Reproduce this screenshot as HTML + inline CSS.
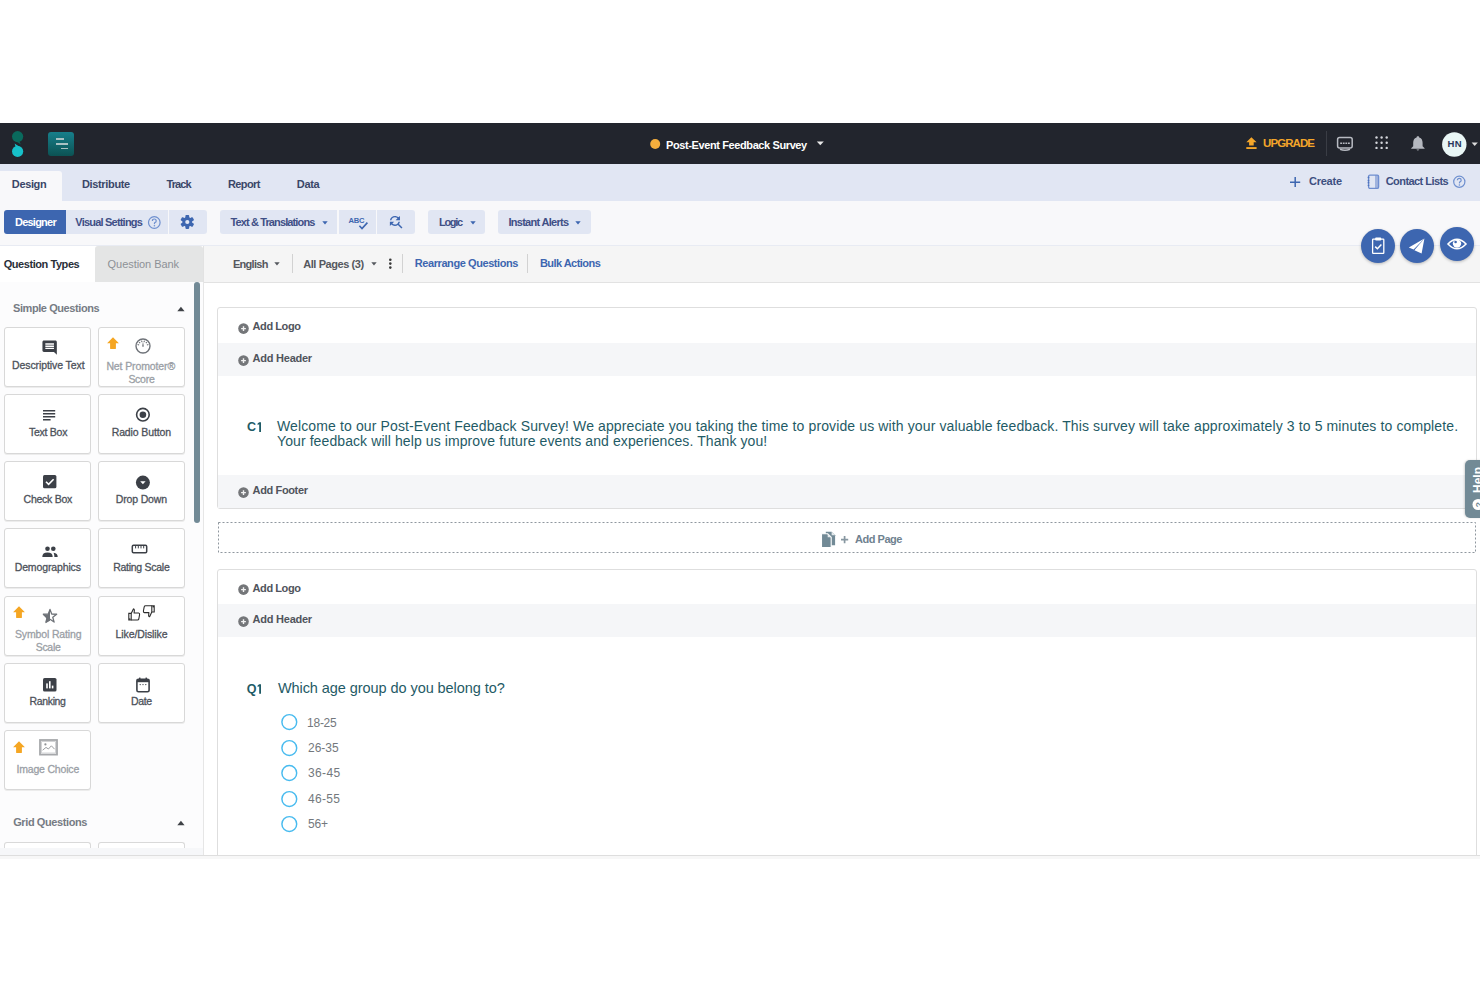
<!DOCTYPE html>
<html><head><meta charset="utf-8"><style>
html,body{margin:0;padding:0;}
body{width:1480px;height:987px;position:relative;overflow:hidden;background:#fff;font-family:"Liberation Sans",sans-serif;}
.t{position:absolute;white-space:nowrap;}
svg{display:block;}
</style></head><body>
<div style="position:absolute;left:0px;top:123px;width:1480px;height:41px;background:#22252d;"></div>
<div style="position:absolute;left:0px;top:164px;width:1480px;height:37px;background:#e1e6f3;"></div>
<div style="position:absolute;left:0px;top:171px;width:62px;height:30px;background:#f8f8fa;border-radius:0 3px 0 0;"></div>
<div style="position:absolute;left:0px;top:201px;width:1480px;height:45px;background:#f8f8fa;border-bottom:1px solid #e8ebf3;box-sizing:border-box;"></div>
<div style="position:absolute;left:0px;top:246px;width:95px;height:36px;background:#ffffff;"></div>
<div style="position:absolute;left:95px;top:246px;width:108px;height:36px;background:#e4e5e5;border-radius:3px 3px 0 0;"></div>
<div style="position:absolute;left:203px;top:246px;width:1277px;height:37px;background:#f5f5f5;border-bottom:1px solid #e2e2e2;border-left:1px solid #e2e2e2;box-sizing:border-box;"></div>
<div style="position:absolute;left:0px;top:282px;width:204px;height:573px;background:#fcfcfd;border-right:1px solid #e6e6e6;box-sizing:border-box;"></div>
<div style="position:absolute;left:204px;top:283px;width:1276px;height:572px;background:#ffffff;"></div>
<div style="position:absolute;left:0px;top:855px;width:1480px;height:1px;background:#dedede;"></div>
<div style="position:absolute;left:0px;top:856px;width:1480px;height:3px;background:#f7f7f7;"></div>
<svg style="position:absolute;left:8px;top:129px;overflow:visible;" width="20" height="30" viewBox="0 0 20 30">
<circle cx="9.6" cy="7.6" r="5.6" fill="#0a6a5d"/>
<path d="M11.5 12.5 L12.8 15.5 L9.0 12.8 Z" fill="#0a6a5d"/>
<circle cx="9.6" cy="22.4" r="5.6" fill="#17c0c9"/>
<path d="M7.5 17.6 L6.6 14.4 L10.2 16.9 Z" fill="#17c0c9"/>
</svg>
<div style="position:absolute;left:48px;top:132px;width:26px;height:24px;background:linear-gradient(#177f8b,#0c5253);border-radius:3px;"></div>
<div style="position:absolute;left:56px;top:138.1px;width:8px;height:1.7px;background:#a9c1c3;"></div>
<div style="position:absolute;left:56px;top:142.9px;width:12px;height:1.7px;background:#a9c1c3;"></div>
<div style="position:absolute;left:61px;top:147.5px;width:7px;height:1.7px;background:#a9c1c3;"></div>
<svg style="position:absolute;left:650px;top:139px;overflow:visible;" width="11" height="11" viewBox="0 0 11 11"><circle cx="5.2" cy="5" r="5" fill="#f5ae3d"/></svg>
<svg style="position:absolute;left:816px;top:141px;overflow:visible;" width="9" height="5" viewBox="0 0 9 5"><path d="M0.8 0.5 L7.8 0.5 L4.3 4.3 Z" fill="#e8e8e8"/></svg>
<svg style="position:absolute;left:1246px;top:137px;overflow:visible;" width="12" height="13" viewBox="0 0 12 13"><path d="M5.4 0.3 L10.6 5.3 L7.7 5.3 L7.7 8.6 L3.1 8.6 L3.1 5.3 L0.3 5.3 Z" fill="#f4a62a"/><rect x="0.3" y="10.1" width="10.3" height="1.9" fill="#f4a62a"/></svg>
<div style="position:absolute;left:1326px;top:131px;width:1px;height:25px;background:#3a3d45;"></div>
<svg style="position:absolute;left:1336px;top:136px;overflow:visible;" width="18" height="16" viewBox="0 0 18 16"><rect x="1.6" y="1.6" width="14.6" height="10.4" rx="2" fill="none" stroke="#b8bbc2" stroke-width="1.5"/><path d="M4.2 7.2 H13.8" stroke="#b8bbc2" stroke-width="1.5" stroke-dasharray="1.8 0.8"/><path d="M4 13.2 Q9 15.2 14 13.2" stroke="#b8bbc2" stroke-width="1.6" fill="none"/></svg>
<svg style="position:absolute;left:1375px;top:135.8px;overflow:visible;" width="14" height="14" viewBox="0 0 14 14"><circle cx="1.5" cy="1.5" r="1.2" fill="#d4d6db"/><circle cx="1.5" cy="6.7" r="1.2" fill="#d4d6db"/><circle cx="1.5" cy="11.9" r="1.2" fill="#d4d6db"/><circle cx="6.6" cy="1.5" r="1.2" fill="#d4d6db"/><circle cx="6.6" cy="6.7" r="1.2" fill="#d4d6db"/><circle cx="6.6" cy="11.9" r="1.2" fill="#d4d6db"/><circle cx="11.7" cy="1.5" r="1.2" fill="#d4d6db"/><circle cx="11.7" cy="6.7" r="1.2" fill="#d4d6db"/><circle cx="11.7" cy="11.9" r="1.2" fill="#d4d6db"/></svg>
<svg style="position:absolute;left:1410px;top:135px;overflow:visible;" width="16" height="17" viewBox="0 0 16 17"><path d="M7.9 1.2 C8.8 1.2 9.2 1.8 9.2 2.4 C11.8 3.1 12.6 5.4 12.6 7.8 L12.6 11.2 L14.6 13.2 L14.6 13.8 L1.2 13.8 L1.2 13.2 L3.2 11.2 L3.2 7.8 C3.2 5.4 4.0 3.1 6.6 2.4 C6.6 1.8 7.0 1.2 7.9 1.2 Z" fill="#b5b8bf"/><path d="M6.4 14.6 Q7.9 16.6 9.4 14.6 Z" fill="#b5b8bf"/></svg>
<svg style="position:absolute;left:1442px;top:132px;overflow:visible;" width="25" height="25" viewBox="0 0 25 25"><circle cx="12.3" cy="12.5" r="12.2" fill="#e9f6f5"/></svg>
<svg style="position:absolute;left:1471px;top:142px;overflow:visible;" width="8" height="5" viewBox="0 0 8 5"><path d="M0.6 0.6 L6.8 0.6 L3.7 4 Z" fill="#dcdcdc"/></svg>
<svg style="position:absolute;left:1289px;top:176px;overflow:visible;" width="12" height="12" viewBox="0 0 12 12"><path d="M6.2 1 V11 M1 6.2 H11.2" stroke="#3d66b0" stroke-width="1.5"/></svg>
<svg style="position:absolute;left:1366px;top:174px;overflow:visible;" width="14" height="16" viewBox="0 0 14 16"><rect x="9" y="1" width="3.6" height="13.6" fill="#a0b3dd"/><rect x="2.6" y="1.2" width="10" height="13.2" rx="1.3" fill="none" stroke="#6f8ed0" stroke-width="1.3"/><circle cx="2.5" cy="3.5" r="0.9" fill="#4e73bf"/><circle cx="2.5" cy="6.5" r="0.9" fill="#4e73bf"/><circle cx="2.5" cy="8.7" r="0.9" fill="#4e73bf"/><circle cx="2.5" cy="11.3" r="0.9" fill="#4e73bf"/></svg>
<svg style="position:absolute;left:1452px;top:175px;overflow:visible;" width="14" height="14" viewBox="0 0 14 14"><circle cx="7.3" cy="6.8" r="5.6" fill="none" stroke="#6f90cf" stroke-width="1.2"/><path d="M5.4 5.3 Q5.4 3.4 7.3 3.4 Q9.2 3.4 9.2 5.2 Q9.2 6.4 7.6 7.1 L7.4 8.4" fill="none" stroke="#6f90cf" stroke-width="1.2"/><circle cx="7.4" cy="10" r="0.8" fill="#6f90cf"/></svg>
<div style="position:absolute;left:4px;top:210px;width:62px;height:24px;background:#3d66b0;border-radius:3px 0 0 3px;"></div>
<div style="position:absolute;left:66px;top:210px;width:102px;height:24px;background:#e1e6f3;"></div>
<div style="position:absolute;left:169px;top:210px;width:38px;height:24px;background:#e1e6f3;border-radius:0 3px 3px 0;"></div>
<div style="position:absolute;left:220px;top:210px;width:117px;height:24px;background:#e1e6f3;border-radius:3px 0 0 3px;"></div>
<div style="position:absolute;left:339px;top:210px;width:37px;height:24px;background:#e1e6f3;"></div>
<div style="position:absolute;left:377px;top:210px;width:38px;height:24px;background:#e1e6f3;border-radius:0 3px 3px 0;"></div>
<div style="position:absolute;left:428px;top:210px;width:57px;height:24px;background:#e1e6f3;border-radius:3px;"></div>
<div style="position:absolute;left:498px;top:210px;width:93px;height:24px;background:#e1e6f3;border-radius:3px;"></div>
<svg style="position:absolute;left:147px;top:215px;overflow:visible;" width="15" height="15" viewBox="0 0 15 15"><circle cx="7.3" cy="7.5" r="5.8" fill="none" stroke="#6f90cf" stroke-width="1.2"/><path d="M5.4 6 Q5.4 4 7.3 4 Q9.2 4 9.2 5.9 Q9.2 7.1 7.6 7.8 L7.4 9.2" fill="none" stroke="#6f90cf" stroke-width="1.2"/><circle cx="7.4" cy="10.8" r="0.8" fill="#6f90cf"/></svg>
<svg style="position:absolute;left:180px;top:215px;overflow:visible;" width="15" height="15" viewBox="0 0 15 15"><g transform="translate(7.3 7)"><rect x="-1.9" y="-6.9" width="3.8" height="4" rx="0.8" fill="#3d66b0" transform="rotate(0)"/><rect x="-1.9" y="-6.9" width="3.8" height="4" rx="0.8" fill="#3d66b0" transform="rotate(60)"/><rect x="-1.9" y="-6.9" width="3.8" height="4" rx="0.8" fill="#3d66b0" transform="rotate(120)"/><rect x="-1.9" y="-6.9" width="3.8" height="4" rx="0.8" fill="#3d66b0" transform="rotate(180)"/><rect x="-1.9" y="-6.9" width="3.8" height="4" rx="0.8" fill="#3d66b0" transform="rotate(240)"/><rect x="-1.9" y="-6.9" width="3.8" height="4" rx="0.8" fill="#3d66b0" transform="rotate(300)"/><circle r="4.9" fill="#3d66b0"/><circle r="2.1" fill="#e1e6f3"/></g></svg>
<svg style="position:absolute;left:322px;top:221px;overflow:visible;" width="7" height="4.6" viewBox="0 0 7 4.6"><path d="M0.3 0.3 L5.7 0.3 L3.0 3.6 Z" fill="#3d66b0"/></svg>
<svg style="position:absolute;left:470px;top:221px;overflow:visible;" width="7" height="4.6" viewBox="0 0 7 4.6"><path d="M0.3 0.3 L5.7 0.3 L3.0 3.6 Z" fill="#3d66b0"/></svg>
<svg style="position:absolute;left:575px;top:221px;overflow:visible;" width="7" height="4.6" viewBox="0 0 7 4.6"><path d="M0.3 0.3 L5.7 0.3 L3.0 3.6 Z" fill="#3d66b0"/></svg>
<svg style="position:absolute;left:346px;top:214px;overflow:visible;" width="24" height="17" viewBox="0 0 24 17"><text x="2.4" y="8.8" font-family="Liberation Sans" font-weight="700" font-size="7.6" fill="#3d66b0" letter-spacing="-0.2">ABC</text><path d="M13.4 11.8 L16 14.6 L21.4 8.6" fill="none" stroke="#3d66b0" stroke-width="1.6"/></svg>
<svg style="position:absolute;left:386.5px;top:212.5px;overflow:visible;" width="17.3" height="17.3" viewBox="0 0 17.3 17.3"><path transform="scale(0.72)" fill="#3d66b0" d="M11 6c1.38 0 2.63.56 3.54 1.46L12 10h6V4l-2.05 2.05C14.68 4.78 12.93 4 11 4c-3.53 0-6.43 2.61-6.92 6H6.1c.46-2.28 2.48-4 4.9-4zm5.64 9.140c.66-.9 1.12-1.97 1.28-3.14H15.9c-.46 2.28-2.48 4-4.9 4-1.38 0-2.630-.56-3.54-1.46L10 12H4v6l2.05-2.05C7.32 17.22 9.07 18 11 18c1.55 0 2.98-.51 4.14-1.36L20 21.49 21.49 20l-4.85-4.86z"/></svg>
<svg style="position:absolute;left:274px;top:262px;overflow:visible;" width="7" height="4.4" viewBox="0 0 7 4.4"><path d="M0.3 0.3 L5.7 0.3 L3.0 3.4 Z" fill="#55585e"/></svg>
<div style="position:absolute;left:292px;top:254px;width:1px;height:19px;background:#d2d2d2;"></div>
<svg style="position:absolute;left:370.5px;top:262px;overflow:visible;" width="7" height="4.4" viewBox="0 0 7 4.4"><path d="M0.3 0.3 L5.7 0.3 L3.0 3.4 Z" fill="#55585e"/></svg>
<svg style="position:absolute;left:388px;top:258px;overflow:visible;" width="5" height="12" viewBox="0 0 5 12"><circle cx="2.3" cy="1.8" r="1.3" fill="#3a3a3a"/><circle cx="2.3" cy="5.6" r="1.3" fill="#3a3a3a"/><circle cx="2.3" cy="9.6" r="1.3" fill="#3a3a3a"/></svg>
<div style="position:absolute;left:402px;top:254px;width:1px;height:19px;background:#d2d2d2;"></div>
<div style="position:absolute;left:527px;top:254px;width:1px;height:19px;background:#d2d2d2;"></div>
<div style="position:absolute;left:1360.5px;top:228.5px;width:34px;height:34px;border-radius:50%;background:#3d66b0;box-shadow:0 1px 3px rgba(0,0,0,0.25);"></div>
<svg style="position:absolute;left:1360.5px;top:228.5px;overflow:visible;" width="34" height="34" viewBox="0 0 34 34"><rect x="11.6" y="10.2" width="11.2" height="14.2" rx="0.6" fill="none" stroke="#fff" stroke-width="1.3"/><rect x="14.2" y="8.6" width="6" height="3" rx="0.8" fill="#fff"/><path d="M14.2 17.6 L16.4 19.8 L20.4 15.6" fill="none" stroke="#fff" stroke-width="1.5"/></svg>
<div style="position:absolute;left:1399.8px;top:228.5px;width:34px;height:34px;border-radius:50%;background:#3d66b0;box-shadow:0 1px 3px rgba(0,0,0,0.25);"></div>
<svg style="position:absolute;left:1399.8px;top:228.5px;overflow:visible;" width="34" height="34" viewBox="0 0 34 34"><path d="M24.4 9.6 L8.8 18.6 L13.6 20.4 Z" fill="#fff"/><path d="M24.4 9.6 L14.4 21.2 L21.6 24.6 Z" fill="#fff"/></svg>
<div style="position:absolute;left:1439.5px;top:227px;width:34px;height:34px;border-radius:50%;background:#3d66b0;box-shadow:0 1px 3px rgba(0,0,0,0.25);"></div>
<svg style="position:absolute;left:1439.5px;top:227px;overflow:visible;" width="34" height="34" viewBox="0 0 34 34"><path d="M8 17 Q17 7.5 26 17 Q17 26.5 8 17 Z" fill="none" stroke="#fff" stroke-width="1.6"/><circle cx="17" cy="16.6" r="4.2" fill="#fff"/><circle cx="15.6" cy="15" r="1.3" fill="#3d66b0"/></svg>
<div class="t" style="left:666.00px;top:139.89px;font-size:11px;line-height:11px;color:#ffffff;font-weight:700;letter-spacing:-0.392px;">Post-Event Feedback Survey</div>
<div class="t" style="left:1263.00px;top:137.66px;font-size:11.5px;line-height:11.5px;color:#f4a62a;font-weight:700;letter-spacing:-0.917px;">UPGRADE</div>
<div class="t" style="left:1447.60px;top:139.36px;font-size:9.5px;line-height:9.5px;color:#28365a;font-weight:700;letter-spacing:0.300px;">HN</div>
<div class="t" style="left:11.80px;top:179.49px;font-size:11px;line-height:11px;color:#3a4668;font-weight:700;letter-spacing:-0.360px;">Design</div>
<div class="t" style="left:81.90px;top:179.49px;font-size:11px;line-height:11px;color:#3a4668;font-weight:700;letter-spacing:-0.333px;">Distribute</div>
<div class="t" style="left:166.40px;top:179.49px;font-size:11px;line-height:11px;color:#3a4668;font-weight:700;letter-spacing:-0.850px;">Track</div>
<div class="t" style="left:228.00px;top:179.49px;font-size:11px;line-height:11px;color:#3a4668;font-weight:700;letter-spacing:-0.600px;">Report</div>
<div class="t" style="left:296.80px;top:179.49px;font-size:11px;line-height:11px;color:#3a4668;font-weight:700;letter-spacing:-0.333px;">Data</div>
<div class="t" style="left:1309.00px;top:176.19px;font-size:11px;line-height:11px;color:#3d4f80;font-weight:700;letter-spacing:-0.240px;">Create</div>
<div class="t" style="left:1385.70px;top:176.19px;font-size:11px;line-height:11px;color:#3d4f80;font-weight:700;letter-spacing:-0.558px;">Contact Lists</div>
<div class="t" style="left:15.00px;top:217.09px;font-size:11px;line-height:11px;color:#ffffff;font-weight:700;letter-spacing:-0.771px;">Designer</div>
<div class="t" style="left:75.30px;top:217.09px;font-size:11px;line-height:11px;color:#3f4f86;font-weight:700;letter-spacing:-0.793px;">Visual Settings</div>
<div class="t" style="left:230.50px;top:217.09px;font-size:11px;line-height:11px;color:#3f4f86;font-weight:700;letter-spacing:-0.878px;">Text &amp; Translations</div>
<div class="t" style="left:439.00px;top:217.09px;font-size:11px;line-height:11px;color:#3f4f86;font-weight:700;letter-spacing:-1.300px;">Logic</div>
<div class="t" style="left:508.40px;top:217.09px;font-size:11px;line-height:11px;color:#3f4f86;font-weight:700;letter-spacing:-0.708px;">Instant Alerts</div>
<div class="t" style="left:3.70px;top:258.69px;font-size:11px;line-height:11px;color:#2a2f38;font-weight:700;letter-spacing:-0.438px;">Question Types</div>
<div class="t" style="left:107.60px;top:258.69px;font-size:11px;line-height:11px;color:#8d9196;font-weight:400;letter-spacing:-0.058px;">Question Bank</div>
<div class="t" style="left:233.00px;top:258.89px;font-size:11px;line-height:11px;color:#55585e;font-weight:700;letter-spacing:-0.717px;">English</div>
<div class="t" style="left:303.20px;top:258.89px;font-size:11px;line-height:11px;color:#55585e;font-weight:700;letter-spacing:-0.417px;">All Pages (3)</div>
<div class="t" style="left:414.80px;top:257.69px;font-size:11px;line-height:11px;color:#3d66b0;font-weight:700;letter-spacing:-0.422px;">Rearrange Questions</div>
<div class="t" style="left:539.90px;top:257.69px;font-size:11px;line-height:11px;color:#3d66b0;font-weight:700;letter-spacing:-0.536px;">Bulk Actions</div>
<div style="position:absolute;left:194px;top:282px;width:6px;height:241px;background:#728a96;border-radius:3px;"></div>
<div class="t" style="left:13.00px;top:302.69px;font-size:11px;line-height:11px;color:#767b84;font-weight:700;letter-spacing:-0.420px;">Simple Questions</div>
<svg style="position:absolute;left:177px;top:306px;overflow:visible;" width="8" height="6" viewBox="0 0 8 6"><path d="M0.3 5.2 L7.6 5.2 L3.95 0.8 Z" fill="#3f4247"/></svg>
<div class="t" style="left:13.20px;top:817.19px;font-size:11px;line-height:11px;color:#767b84;font-weight:700;letter-spacing:-0.400px;">Grid Questions</div>
<svg style="position:absolute;left:177px;top:820px;overflow:visible;" width="8" height="6" viewBox="0 0 8 6"><path d="M0.3 5.2 L7.6 5.2 L3.95 0.8 Z" fill="#3f4247"/></svg>
<div style="position:absolute;left:4px;top:842px;width:87px;height:10px;background:#fff;border:1px solid #d9d9d9;border-bottom:none;border-radius:3px 3px 0 0;box-sizing:border-box;"></div>
<div style="position:absolute;left:98px;top:842px;width:87px;height:10px;background:#fff;border:1px solid #d9d9d9;border-bottom:none;border-radius:3px 3px 0 0;box-sizing:border-box;"></div>
<div style="position:absolute;left:0px;top:848px;width:203px;height:7px;background:#f6f7f9;"></div>
<div style="position:absolute;left:4px;top:327px;width:87px;height:60px;background:#fff;border:1px solid #d8d8d8;border-radius:3px;box-sizing:border-box;box-shadow:0 1px 0 #ececec;"></div>
<div style="position:absolute;left:98px;top:327px;width:87px;height:60px;background:#fff;border:1px solid #d8d8d8;border-radius:3px;box-sizing:border-box;box-shadow:0 1px 0 #ececec;"></div>
<div style="position:absolute;left:4px;top:394px;width:87px;height:60px;background:#fff;border:1px solid #d8d8d8;border-radius:3px;box-sizing:border-box;box-shadow:0 1px 0 #ececec;"></div>
<div style="position:absolute;left:98px;top:394px;width:87px;height:60px;background:#fff;border:1px solid #d8d8d8;border-radius:3px;box-sizing:border-box;box-shadow:0 1px 0 #ececec;"></div>
<div style="position:absolute;left:4px;top:461px;width:87px;height:60px;background:#fff;border:1px solid #d8d8d8;border-radius:3px;box-sizing:border-box;box-shadow:0 1px 0 #ececec;"></div>
<div style="position:absolute;left:98px;top:461px;width:87px;height:60px;background:#fff;border:1px solid #d8d8d8;border-radius:3px;box-sizing:border-box;box-shadow:0 1px 0 #ececec;"></div>
<div style="position:absolute;left:4px;top:528px;width:87px;height:60px;background:#fff;border:1px solid #d8d8d8;border-radius:3px;box-sizing:border-box;box-shadow:0 1px 0 #ececec;"></div>
<div style="position:absolute;left:98px;top:528px;width:87px;height:60px;background:#fff;border:1px solid #d8d8d8;border-radius:3px;box-sizing:border-box;box-shadow:0 1px 0 #ececec;"></div>
<div style="position:absolute;left:4px;top:596px;width:87px;height:60px;background:#fff;border:1px solid #d8d8d8;border-radius:3px;box-sizing:border-box;box-shadow:0 1px 0 #ececec;"></div>
<div style="position:absolute;left:98px;top:596px;width:87px;height:60px;background:#fff;border:1px solid #d8d8d8;border-radius:3px;box-sizing:border-box;box-shadow:0 1px 0 #ececec;"></div>
<div style="position:absolute;left:4px;top:663px;width:87px;height:60px;background:#fff;border:1px solid #d8d8d8;border-radius:3px;box-sizing:border-box;box-shadow:0 1px 0 #ececec;"></div>
<div style="position:absolute;left:98px;top:663px;width:87px;height:60px;background:#fff;border:1px solid #d8d8d8;border-radius:3px;box-sizing:border-box;box-shadow:0 1px 0 #ececec;"></div>
<div style="position:absolute;left:4px;top:730px;width:87px;height:60px;background:#fff;border:1px solid #d8d8d8;border-radius:3px;box-sizing:border-box;box-shadow:0 1px 0 #ececec;"></div>
<div class="t" style="left:12.00px;top:360.11px;font-size:10.5px;line-height:10.5px;color:#4d525b;font-weight:400;letter-spacing:-0.087px;-webkit-text-stroke:0.3px;">Descriptive Text</div>
<div class="t" style="left:106.40px;top:360.51px;font-size:10.5px;line-height:10.5px;color:#9b9fa6;font-weight:400;letter-spacing:-0.117px;-webkit-text-stroke:0.3px;">Net Promoter&reg;</div>
<div class="t" style="left:128.40px;top:373.51px;font-size:10.5px;line-height:10.5px;color:#9b9fa6;font-weight:400;letter-spacing:-0.275px;-webkit-text-stroke:0.3px;">Score</div>
<div class="t" style="left:28.90px;top:427.31px;font-size:10.5px;line-height:10.5px;color:#4d525b;font-weight:400;letter-spacing:-0.243px;-webkit-text-stroke:0.3px;">Text Box</div>
<div class="t" style="left:111.70px;top:427.31px;font-size:10.5px;line-height:10.5px;color:#4d525b;font-weight:400;letter-spacing:-0.118px;-webkit-text-stroke:0.3px;">Radio Button</div>
<div class="t" style="left:23.60px;top:494.11px;font-size:10.5px;line-height:10.5px;color:#4d525b;font-weight:400;letter-spacing:-0.250px;-webkit-text-stroke:0.3px;">Check Box</div>
<div class="t" style="left:115.80px;top:494.11px;font-size:10.5px;line-height:10.5px;color:#4d525b;font-weight:400;letter-spacing:-0.162px;-webkit-text-stroke:0.3px;">Drop Down</div>
<div class="t" style="left:14.70px;top:561.71px;font-size:10.5px;line-height:10.5px;color:#4d525b;font-weight:400;letter-spacing:-0.127px;-webkit-text-stroke:0.3px;">Demographics</div>
<div class="t" style="left:113.20px;top:561.71px;font-size:10.5px;line-height:10.5px;color:#4d525b;font-weight:400;letter-spacing:-0.273px;-webkit-text-stroke:0.3px;">Rating Scale</div>
<div class="t" style="left:14.90px;top:628.91px;font-size:10.5px;line-height:10.5px;color:#9b9fa6;font-weight:400;letter-spacing:-0.133px;-webkit-text-stroke:0.3px;">Symbol Rating</div>
<div class="t" style="left:35.70px;top:642.11px;font-size:10.5px;line-height:10.5px;color:#9b9fa6;font-weight:400;letter-spacing:-0.300px;-webkit-text-stroke:0.3px;">Scale</div>
<div class="t" style="left:115.50px;top:628.91px;font-size:10.5px;line-height:10.5px;color:#4d525b;font-weight:400;letter-spacing:-0.091px;-webkit-text-stroke:0.3px;">Like/Dislike</div>
<div class="t" style="left:29.60px;top:696.31px;font-size:10.5px;line-height:10.5px;color:#4d525b;font-weight:400;letter-spacing:-0.367px;-webkit-text-stroke:0.3px;">Ranking</div>
<div class="t" style="left:131.00px;top:696.31px;font-size:10.5px;line-height:10.5px;color:#4d525b;font-weight:400;letter-spacing:-0.333px;-webkit-text-stroke:0.3px;">Date</div>
<div class="t" style="left:16.40px;top:763.91px;font-size:10.5px;line-height:10.5px;color:#9b9fa6;font-weight:400;letter-spacing:-0.173px;-webkit-text-stroke:0.3px;">Image Choice</div>
<svg style="position:absolute;left:106.8px;top:336.6px;overflow:visible;" width="13" height="13" viewBox="0 0 13 13"><path d="M6 0.2 L11.9 6.3 L8.9 6.3 L8.9 11.6 Q8.9 12 8.5 12 L3.5 12 Q3.1 12 3.1 11.6 L3.1 6.3 L0.1 6.3 Z" fill="#f5a623"/></svg>
<svg style="position:absolute;left:13.4px;top:605.6px;overflow:visible;" width="13" height="13" viewBox="0 0 13 13"><path d="M6 0.2 L11.9 6.3 L8.9 6.3 L8.9 11.6 Q8.9 12 8.5 12 L3.5 12 Q3.1 12 3.1 11.6 L3.1 6.3 L0.1 6.3 Z" fill="#f5a623"/></svg>
<svg style="position:absolute;left:13.4px;top:740.6px;overflow:visible;" width="13" height="13" viewBox="0 0 13 13"><path d="M6 0.2 L11.9 6.3 L8.9 6.3 L8.9 11.6 Q8.9 12 8.5 12 L3.5 12 Q3.1 12 3.1 11.6 L3.1 6.3 L0.1 6.3 Z" fill="#f5a623"/></svg>
<svg style="position:absolute;left:40.8px;top:339.3px;overflow:visible;" width="17" height="17" viewBox="0 0 17 17"><path transform="scale(0.72)" fill="#3c4047" d="M21.99 4c0-1.1-.89-2-1.99-2H4c-1.1 0-2 .9-2 2v12c0 1.1.9 2 2 2h14l4 4-.01-18zM18 14H6v-2h12v2zm0-3H6V9h12v2zm0-3H6V6h12v2z"/></svg>
<svg style="position:absolute;left:135px;top:338.3px;overflow:visible;" width="16" height="16" viewBox="0 0 16 16"><circle cx="8" cy="8" r="7" fill="none" stroke="#6e7278" stroke-width="1.4"/><line x1="4.14" y1="6.96" x2="2.59" y2="6.55" stroke="#6e7278" stroke-width="1.1"/><line x1="5.17" y1="5.17" x2="4.04" y2="4.04" stroke="#6e7278" stroke-width="1.1"/><line x1="6.96" y1="4.14" x2="6.55" y2="2.59" stroke="#6e7278" stroke-width="1.1"/><line x1="9.04" y1="4.14" x2="9.45" y2="2.59" stroke="#6e7278" stroke-width="1.1"/><line x1="10.83" y1="5.17" x2="11.96" y2="4.04" stroke="#6e7278" stroke-width="1.1"/><line x1="11.86" y1="6.96" x2="13.41" y2="6.55" stroke="#6e7278" stroke-width="1.1"/><path d="M7.2 8.2 L8 3.6 L8.8 8.2 Q8 9.4 7.2 8.2 Z" fill="#6e7278"/></svg>
<svg style="position:absolute;left:42.5px;top:410.2px;overflow:visible;" width="13" height="11" viewBox="0 0 13 11"><rect x="0" y="0" width="12.2" height="1.5" fill="#3c4047"/><rect x="0" y="3" width="12.2" height="1.5" fill="#3c4047"/><rect x="0" y="6" width="12.2" height="1.5" fill="#3c4047"/><rect x="0" y="9" width="7.6" height="1.5" fill="#3c4047"/></svg>
<svg style="position:absolute;left:135px;top:407px;overflow:visible;" width="16" height="16" viewBox="0 0 16 16"><circle cx="7.9" cy="7.7" r="6.3" fill="none" stroke="#3c4047" stroke-width="1.6"/><circle cx="7.9" cy="7.7" r="3.3" fill="#3c4047"/></svg>
<svg style="position:absolute;left:42.5px;top:475px;overflow:visible;" width="14" height="14" viewBox="0 0 14 14"><rect x="0" y="0" width="13.4" height="13.2" rx="1.5" fill="#3c4047"/><path d="M3 6.8 L5.6 9.4 L10.6 4.2" fill="none" stroke="#fff" stroke-width="1.6"/></svg>
<svg style="position:absolute;left:135px;top:475px;overflow:visible;" width="16" height="16" viewBox="0 0 16 16"><circle cx="7.9" cy="7.6" r="7" fill="#3c4047"/><path d="M5.2 6.3 L10.6 6.3 L7.9 9.2 Z" fill="#fff"/></svg>
<svg style="position:absolute;left:42px;top:545.5px;overflow:visible;" width="17" height="12" viewBox="0 0 17 12"><circle cx="5.5" cy="2.8" r="2.3" fill="#3c4047"/><circle cx="11.3" cy="2.8" r="2.3" fill="#3c4047"/><path d="M0.3 10.9 Q0.3 6.6 5.5 6.6 Q10.7 6.6 10.7 10.9 Z" fill="#3c4047"/><path d="M11.6 6.7 Q15.7 7 15.7 10.9 L12.4 10.9 Q12.4 8.4 11.6 6.7 Z" fill="#3c4047"/></svg>
<svg style="position:absolute;left:130.5px;top:543.5px;overflow:visible;" width="17" height="10" viewBox="0 0 17 10"><rect x="1.3" y="1.3" width="14.4" height="7.4" rx="1.2" fill="none" stroke="#3c4047" stroke-width="1.5"/><path d="M4.6 1.5 V4.4 M7.3 1.5 V4.4 M10 1.5 V4.4 M12.7 1.5 V4.4" stroke="#3c4047" stroke-width="1"/></svg>
<svg style="position:absolute;left:42.2px;top:607.5px;overflow:visible;" width="16" height="16" viewBox="0 0 16 16"><path d="M8.00,1.40 L9.70,6.05 L14.66,6.24 L10.76,9.30 L12.11,14.06 L8.00,11.30 L3.89,14.06 L5.24,9.30 L1.34,6.24 L6.30,6.05 Z" fill="none" stroke="#6e7278" stroke-width="1.3" stroke-linejoin="round"/><path d="M8 1.4 L8 12.8 L3.6 15.3 L4.5 10.6 L1.2 7 L5.9 6.4 Z" fill="#6e7278"/></svg>
<svg style="position:absolute;left:127.5px;top:607.5px;overflow:visible;" width="13" height="13" viewBox="0 0 13 13"><path d="M0.8 5.4 H3.2 V12 H0.8 Z" fill="none" stroke="#2c2c2c" stroke-width="1.1"/><path d="M3.2 5.4 L5.4 0.9 Q6.2 0.9 6.4 2 L6.1 5 H10.6 Q11.8 5.2 11.6 6.6 L10.8 11 Q10.5 12 9.5 12 H3.2" fill="none" stroke="#2c2c2c" stroke-width="1.1" stroke-linejoin="round"/><rect x="1" y="10.4" width="1.4" height="1.4" fill="#2c2c2c"/></svg>
<svg style="position:absolute;left:142px;top:604.5px;overflow:visible;" width="13" height="13" viewBox="0 0 13 13"><path d="M12.2 7 H9.8 V0.8 H12.2 Z" fill="none" stroke="#2c2c2c" stroke-width="1.1"/><path d="M9.8 7 L7.6 11.8 Q6.8 11.8 6.6 10.7 L6.9 7.6 H2.4 Q1.2 7.4 1.4 6 L2.2 1.8 Q2.5 0.8 3.5 0.8 H9.8" fill="none" stroke="#2c2c2c" stroke-width="1.1" stroke-linejoin="round"/><rect x="10.6" y="1" width="1.4" height="1.4" fill="#2c2c2c"/></svg>
<svg style="position:absolute;left:42.5px;top:677.5px;overflow:visible;" width="14" height="14" viewBox="0 0 14 14"><rect x="0" y="0" width="13.5" height="13.5" rx="1.6" fill="#3c4047"/><rect x="3.2" y="5.4" width="1.6" height="5" fill="#fff"/><rect x="6" y="3.2" width="1.6" height="7.2" fill="#fff"/><rect x="8.8" y="7.6" width="1.6" height="2.8" fill="#fff"/></svg>
<svg style="position:absolute;left:135.5px;top:676.5px;overflow:visible;" width="14" height="16" viewBox="0 0 14 16"><rect x="0.9" y="2.2" width="12.2" height="12.6" rx="1.6" fill="none" stroke="#3c4047" stroke-width="1.6"/><rect x="0.9" y="2.2" width="12.2" height="3" fill="#3c4047"/><rect x="3" y="0.6" width="1.5" height="2.5" fill="#3c4047"/><rect x="9.5" y="0.6" width="1.5" height="2.5" fill="#3c4047"/><circle cx="4.2" cy="7.6" r="0.7" fill="#3c4047"/><circle cx="7" cy="7.6" r="0.7" fill="#3c4047"/><circle cx="9.8" cy="7.6" r="0.7" fill="#3c4047"/></svg>
<svg style="position:absolute;left:39px;top:738.5px;overflow:visible;" width="19" height="17" viewBox="0 0 19 17"><rect x="1" y="1" width="17" height="14.6" fill="none" stroke="#a6a8ab" stroke-width="1.8"/><rect x="2.6" y="2.6" width="13.8" height="11.4" fill="none" stroke="#c9cacc" stroke-width="0.8"/><circle cx="6.4" cy="5.4" r="1.1" fill="#8f9296"/><path d="M3.6 11.2 L7 8.4 L9.4 10 L12.4 6.8 L15.6 10.2" fill="none" stroke="#8f9296" stroke-width="0.9"/></svg>
<div style="position:absolute;left:217px;top:307px;width:1260px;height:202px;background:#fff;border:1px solid #dedede;border-radius:3px;box-sizing:border-box;"></div>
<div style="position:absolute;left:218px;top:343px;width:1258px;height:33px;background:#f5f6f8;"></div>
<div style="position:absolute;left:218px;top:475px;width:1258px;height:33px;background:#f5f6f8;"></div>
<svg style="position:absolute;left:238.1px;top:322.6px;overflow:visible;" width="12" height="12" viewBox="0 0 12 12"><circle cx="5.5" cy="5.6" r="5.3" fill="#747679"/><path d="M5.5 3.2 V8 M3.1 5.6 H7.9" stroke="#f2f2f2" stroke-width="1.4"/></svg>
<div class="t" style="left:252.60px;top:320.69px;font-size:11px;line-height:11px;color:#50545c;font-weight:700;letter-spacing:-0.429px;">Add Logo</div>
<svg style="position:absolute;left:238.1px;top:354.6px;overflow:visible;" width="12" height="12" viewBox="0 0 12 12"><circle cx="5.5" cy="5.6" r="5.3" fill="#747679"/><path d="M5.5 3.2 V8 M3.1 5.6 H7.9" stroke="#f2f2f2" stroke-width="1.4"/></svg>
<div class="t" style="left:252.60px;top:353.09px;font-size:11px;line-height:11px;color:#50545c;font-weight:700;letter-spacing:-0.244px;">Add Header</div>
<svg style="position:absolute;left:238.1px;top:486.6px;overflow:visible;" width="12" height="12" viewBox="0 0 12 12"><circle cx="5.5" cy="5.6" r="5.3" fill="#747679"/><path d="M5.5 3.2 V8 M3.1 5.6 H7.9" stroke="#f2f2f2" stroke-width="1.4"/></svg>
<div class="t" style="left:252.60px;top:485.09px;font-size:11px;line-height:11px;color:#50545c;font-weight:700;letter-spacing:-0.367px;">Add Footer</div>
<div class="t" style="left:246.90px;top:421.32px;font-size:12.5px;line-height:12.5px;color:#1f5b66;font-weight:700;letter-spacing:0.000px;">C</div>
<svg style="position:absolute;left:256.5px;top:422px;overflow:visible;" width="5" height="10" viewBox="0 0 5 10"><path d="M2.2 0.3 H4 V10 H2.2 V2.3 L0.6 3 L0.6 1.4 Z" fill="#1f5b66"/></svg>
<div class="t" style="left:277.00px;top:418.55px;font-size:14px;line-height:14px;color:#1f5b66;font-weight:400;letter-spacing:0.123px;">Welcome to our Post-Event Feedback Survey! We appreciate you taking the time to provide us with your valuable feedback. This survey will take approximately 3 to 5 minutes to complete.</div>
<div class="t" style="left:277.00px;top:433.55px;font-size:14px;line-height:14px;color:#1f5b66;font-weight:400;letter-spacing:0.093px;">Your feedback will help us improve future events and experiences. Thank you!</div>
<svg style="position:absolute;left:218px;top:522px;overflow:visible;" width="1258" height="31" viewBox="0 0 1258 31"><rect x="0.5" y="0.5" width="1257" height="30" fill="none" stroke="#8f979e" stroke-width="1" stroke-dasharray="2 2"/></svg>
<svg style="position:absolute;left:815px;top:526px;overflow:visible;" width="25" height="25" viewBox="0 0 25 25"><path d="M10.8 5.8 H16.6 L20.1 9.3 V19.2 H10.8 Z" fill="#728a96"/><path d="M16.6 5.8 V9.3 H20.1 Z" fill="#e4e9ec"/><path d="M6.5 7.8 H12.7 L16.2 11.3 V21.6 H6.5 Z" fill="#728a96" stroke="#ffffff" stroke-width="1.1"/><path d="M12.7 7.8 V11.3 H16.2 Z" fill="#e4e9ec"/></svg>
<svg style="position:absolute;left:839.5px;top:535px;overflow:visible;" width="10" height="10" viewBox="0 0 10 10"><path d="M4.6 1 V8.2 M1 4.6 H8.2" stroke="#8797a1" stroke-width="1.7"/></svg>
<div class="t" style="left:854.90px;top:533.69px;font-size:11px;line-height:11px;color:#6f8290;font-weight:700;letter-spacing:-0.457px;">Add Page</div>
<div style="position:absolute;left:217px;top:569px;width:1260px;height:300px;background:#fff;border:1px solid #dedede;border-radius:3px;box-sizing:border-box;"></div>
<div style="position:absolute;left:218px;top:604px;width:1258px;height:33px;background:#f5f6f8;"></div>
<svg style="position:absolute;left:238.1px;top:584.1px;overflow:visible;" width="12" height="12" viewBox="0 0 12 12"><circle cx="5.5" cy="5.6" r="5.3" fill="#747679"/><path d="M5.5 3.2 V8 M3.1 5.6 H7.9" stroke="#f2f2f2" stroke-width="1.4"/></svg>
<div class="t" style="left:252.60px;top:582.59px;font-size:11px;line-height:11px;color:#50545c;font-weight:700;letter-spacing:-0.429px;">Add Logo</div>
<svg style="position:absolute;left:238.1px;top:616.1px;overflow:visible;" width="12" height="12" viewBox="0 0 12 12"><circle cx="5.5" cy="5.6" r="5.3" fill="#747679"/><path d="M5.5 3.2 V8 M3.1 5.6 H7.9" stroke="#f2f2f2" stroke-width="1.4"/></svg>
<div class="t" style="left:252.60px;top:614.39px;font-size:11px;line-height:11px;color:#50545c;font-weight:700;letter-spacing:-0.244px;">Add Header</div>
<div class="t" style="left:246.70px;top:682.72px;font-size:12.5px;line-height:12.5px;color:#1f5b66;font-weight:700;letter-spacing:0.000px;">Q</div>
<svg style="position:absolute;left:256.8px;top:683.6px;overflow:visible;" width="5" height="10" viewBox="0 0 5 10"><path d="M2.2 0.3 H4 V9.8 H2.2 V2.3 L0.6 3 L0.6 1.4 Z" fill="#1f5b66"/></svg>
<div class="t" style="left:277.90px;top:680.92px;font-size:14.5px;line-height:14.5px;color:#1f5b66;font-weight:400;letter-spacing:-0.066px;">Which age group do you belong to?</div>
<svg style="position:absolute;left:280px;top:713.3px;overflow:visible;" width="19" height="19" viewBox="0 0 19 19"><circle cx="9.3" cy="9" r="7.4" fill="none" stroke="#48bbef" stroke-width="1.45"/></svg>
<div class="t" style="left:307.10px;top:716.64px;font-size:12px;line-height:12px;color:#73787d;font-weight:400;letter-spacing:-0.275px;">18-25</div>
<svg style="position:absolute;left:280px;top:738.7199999999999px;overflow:visible;" width="19" height="19" viewBox="0 0 19 19"><circle cx="9.3" cy="9" r="7.4" fill="none" stroke="#48bbef" stroke-width="1.45"/></svg>
<div class="t" style="left:308.10px;top:742.06px;font-size:12px;line-height:12px;color:#73787d;font-weight:400;letter-spacing:-0.050px;">26-35</div>
<svg style="position:absolute;left:280px;top:764.14px;overflow:visible;" width="19" height="19" viewBox="0 0 19 19"><circle cx="9.3" cy="9" r="7.4" fill="none" stroke="#48bbef" stroke-width="1.45"/></svg>
<div class="t" style="left:308.10px;top:767.48px;font-size:12px;line-height:12px;color:#73787d;font-weight:400;letter-spacing:0.325px;">36-45</div>
<svg style="position:absolute;left:280px;top:789.56px;overflow:visible;" width="19" height="19" viewBox="0 0 19 19"><circle cx="9.3" cy="9" r="7.4" fill="none" stroke="#48bbef" stroke-width="1.45"/></svg>
<div class="t" style="left:308.10px;top:792.90px;font-size:12px;line-height:12px;color:#73787d;font-weight:400;letter-spacing:0.275px;">46-55</div>
<svg style="position:absolute;left:280px;top:814.98px;overflow:visible;" width="19" height="19" viewBox="0 0 19 19"><circle cx="9.3" cy="9" r="7.4" fill="none" stroke="#48bbef" stroke-width="1.45"/></svg>
<div class="t" style="left:308.10px;top:818.32px;font-size:12px;line-height:12px;color:#73787d;font-weight:400;letter-spacing:-0.200px;">56+</div>
<div style="position:absolute;left:1464.5px;top:459.5px;width:20px;height:58px;background:#728a96;border-radius:5px 0 0 5px;box-shadow:-1px 0 2px rgba(0,0,0,0.15);"></div>
<div style="position:absolute;left:1466px;top:462px;width:14px;height:54px;overflow:hidden;"><div style="position:absolute;left:0;top:0;width:54px;height:14px;transform-origin:0 0;transform:translate(3.5px,54px) rotate(-90deg);white-space:nowrap;"><div style="position:absolute;left:6px;top:3px;width:11px;height:11px;border-radius:50%;background:#fff;"></div><div style="position:absolute;left:8.5px;top:3.5px;font-size:9px;line-height:10px;font-weight:700;color:#728a96;">?</div><div style="position:absolute;left:23px;top:1px;font-size:12px;line-height:14px;font-weight:700;color:#fff;">Help</div></div></div>
<div style="position:absolute;left:0px;top:855px;width:1480px;height:1px;background:#dedede;"></div>
<div style="position:absolute;left:0px;top:856px;width:1480px;height:3px;background:#f7f7f7;"></div>
<div style="position:absolute;left:0px;top:859px;width:1480px;height:128px;background:#ffffff;"></div>
</body></html>
